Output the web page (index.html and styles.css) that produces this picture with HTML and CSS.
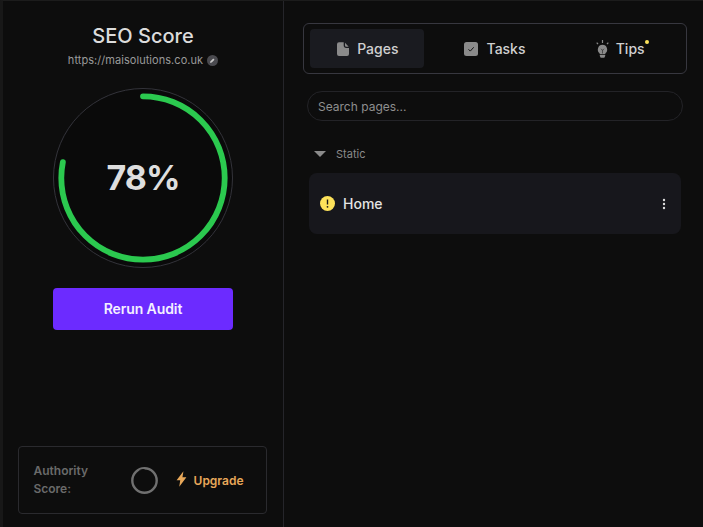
FILE: index.html
```html
<!DOCTYPE html>
<html lang="en">
<head>
<meta charset="utf-8">
<title>SEO Score</title>
<link rel="stylesheet" href="styles.css">
</head>
<body>
<div class="app">
  <aside class="side">
    <h1 class="title">SEO Score</h1>
    <div class="url">https://maisolutions.co.uk
      <span class="edit"><svg viewBox="0 0 10 10" width="7" height="7"><path d="M1.500 8.500l.6-2.400 4-4 1.800 1.800-4 4z" fill="#c8c8c8"/></svg></span>
    </div>
    <div class="gauge">
      <svg class="gauge-svg" viewBox="0 0 182 182" width="182" height="182">
        <circle cx="91" cy="91" r="89.500" fill="#0a0a0a" stroke="#33333a" stroke-width="1"/>
        <circle cx="91" cy="91" r="81.700" fill="none" stroke="#2bc94f" stroke-width="5.800" stroke-linecap="round" stroke-dasharray="400.400 513.300" transform="rotate(-90 91 91)"/>
      </svg>
      <span class="pct">78%</span>
    </div>
    <button class="rerun">Rerun Audit</button>
    <div class="authority">
      <div class="auth-label">Authority<br>Score:</div>
      <svg class="auth-ring" viewBox="0 0 27 27" width="27" height="27"><circle cx="13.500" cy="13.500" r="12.200" fill="none" stroke="#707070" stroke-width="2.400"/><path d="M8.500 3.400a11 11 0 0 1 5-.9" fill="none" stroke="#0d0d0d" stroke-width="1"/></svg>
      <div class="upgrade">
        <svg class="bolt" viewBox="0 0 10 15" width="11" height="16"><path d="M6.800.2L.4 8.600h3.400L2.900 14.800 9.600 5.800H5.900z" fill="#e8a85a"/></svg>
        <span>Upgrade</span>
      </div>
    </div>
  </aside>
  <main class="main">
    <nav class="tabs">
      <div class="tab active">
        <svg viewBox="0 0 12 14" width="12" height="14"><path d="M2 .3H6.700V3.600C6.700 5 7.700 6 9.100 6H12V12A2 2 0 0 1 10 14H2A2 2 0 0 1 0 12V2.300A2 2 0 0 1 2 .3zM8 .8L11.700 4.700H9.200A1.200 1.200 0 0 1 8 3.500z" fill="#8a8a8a"/></svg>
        <span>Pages</span>
      </div>
      <div class="tab tab-tasks">
        <svg viewBox="0 0 14 14" width="14" height="14"><rect width="14" height="14" rx="2.500" fill="#8a8a8a"/><path d="M4.500 7.300l1.800 1.800 3.400-3.800" fill="none" stroke="#111" stroke-width="1"/></svg>
        <span>Tasks</span>
      </div>
      <div class="tab tab-tips">
        <svg viewBox="0 0 13 18" width="13" height="18"><path d="M6.500 4.800a4.800 4.800 0 0 0-2.900 8.500V14h5.800v-.7A4.800 4.800 0 0 0 6.500 4.800z" fill="#8a8a8a"/><path d="M3.800 14.800h5.400v1.100l-.9 1.800H4.700l-.9-1.800z" fill="#8a8a8a"/><path d="M6.500 10v3.500M5 8.800l1.500 1.500L8 8.800" fill="none" stroke="#3a3a3a" stroke-width=".8"/><path d="M6.500 0v3M.7 2.600l1.300 1.600M12.300 2.600L11 4.200" stroke="#8a8a8a" stroke-width="1.200"/></svg>
        <span class="tips-label">Tips<i class="dot"></i></span>
      </div>
    </nav>
    <input class="search" type="text" placeholder="Search pages...">
    <div class="group">
      <svg viewBox="0 0 12 6" width="12" height="6"><path d="M0 0h12L6 6z" fill="#8a8a8a"/></svg>
      <span>Static</span>
    </div>
    <div class="card">
      <svg viewBox="0 0 15 15" width="15" height="15"><circle cx="7.500" cy="7.500" r="7.500" fill="#fde25a"/><path d="M7.500 3.500v5" stroke="#1a1a1a" stroke-width="1.400"/><circle cx="7.500" cy="10.800" r=".9" fill="#1a1a1a"/></svg>
      <span class="card-name">Home</span>
      <svg class="more" viewBox="0 0 4 12" width="4" height="12"><circle cx="2" cy="2" r="1.200" fill="#ddd"/><circle cx="2" cy="6" r="1.200" fill="#ddd"/><circle cx="2" cy="10" r="1.200" fill="#ddd"/></svg>
    </div>
  </main>
</div>
</body>
</html>
```
FILE: styles.css
```css
* { box-sizing: border-box; }
html, body { margin: 0; height: 100%; }
body {
  background: #0d0d0d;
  font-family: Inter, "Liberation Sans", sans-serif;
  color: #e0e0e0;
  overflow: hidden;
}
.app {
  display: flex;
  height: 527px;
  border-top: 1px solid #1c1c1c;
  border-left: 3px solid #181818;
}
.side {
  width: 281px;
  flex: none;
  border-right: 1px solid #25252a;
  display: flex;
  flex-direction: column;
  align-items: center;
  padding: 23px 0 13px;
}
.title {
  margin: 0;
  font-size: 20px;
  line-height: 24px;
  font-weight: 500;
  color: #dcdcdc;
}
.url {
  margin-top: 5px;
  font-size: 11px;
  line-height: 14px;
  letter-spacing: 0.05px;
  color: #9a9a9a;
  display: flex;
  align-items: center;
  gap: 4px;
}
.edit {
  width: 11px;
  height: 11px;
  border-radius: 50%;
  background: #4a4a4f;
  display: flex;
  align-items: center;
  justify-content: center;
}
.gauge {
  margin-top: 20px;
  width: 182px;
  height: 182px;
  position: relative;
  display: flex;
  align-items: center;
  justify-content: center;
  padding-bottom: 2px;
}
.gauge-svg { position: absolute; inset: 0; }
.pct {
  position: relative;
  font-size: 34px;
  font-weight: 700;
  letter-spacing: -1px;
  color: #dedede;
}
.rerun {
  margin-top: 19px;
  width: 180px;
  height: 42px;
  border: 0;
  border-radius: 4px;
  background: #6c2bff;
  color: #f4f0ff;
  padding: 0 0 2px;
  letter-spacing: -0.1px;
  font: 600 14px Inter, "Liberation Sans", sans-serif;
}
.authority {
  margin: auto 2px 0 0;
  width: 249px;
  height: 68px;
  border: 1px solid #2a2a2e;
  border-radius: 4px;
  display: flex;
  align-items: center;
  padding: 0 22px 0 15px;
}
.auth-label {
  font-size: 12px;
  line-height: 18px;
  font-weight: 600;
  color: #6a6a6a;
  width: 97px;
}
.auth-ring { flex: none; }
.upgrade {
  margin-left: auto;
  display: flex;
  align-items: center;
  gap: 7px;
  font-size: 12px;
  font-weight: 600;
  color: #e8a85a;
}
.bolt { margin-top: -2px; }
.main {
  flex: 1;
  padding: 22px 16px 0 19px;
  display: flex;
  flex-direction: column;
  align-items: flex-start;
}
.tabs {
  width: 384px;
  height: 51px;
  border: 1px solid #37373f;
  border-radius: 6px;
  padding: 5px 6px;
  display: flex;
  gap: 14px;
}
.tab {
  flex: 1;
  display: flex;
  align-items: center;
  justify-content: center;
  gap: 8px;
  border-radius: 4px;
  font-size: 14px;
  font-weight: 500;
  color: #d0d0d0;
  padding-left: 2px;
}
.tab.active { background: #1a1b20; }
.tab-tasks { gap: 9px; padding-left: 1px; }
.tab-tips { gap: 7px; padding: 0 4px 0 0; }
.tips-label { position: relative; }
.dot {
  position: absolute;
  top: 0;
  right: -4px;
  width: 4px;
  height: 4px;
  border-radius: 50%;
  background: #fde25a;
}
.search {
  margin: 17px 0 0 4px;
  width: 376px;
  height: 30px;
  border: 1px solid #232327;
  border-radius: 15px;
  background: transparent;
  padding: 0 10px;
  font: 400 12px Inter, "Liberation Sans", sans-serif;
  color: #ddd;
}
.search::placeholder { color: #8f8f8f; opacity: 1; }
.group {
  margin: 26px 0 0 11px;
  display: flex;
  align-items: center;
  gap: 10px;
  font-size: 11px;
  line-height: 14px;
  color: #8a8a8a;
}
.card {
  margin: 12px 0 0 6px;
  width: 372px;
  height: 61px;
  border-radius: 8px;
  background: #17171c;
  display: flex;
  align-items: center;
  padding: 0 15px 0 11px;
  gap: 8px;
}
.card-name {
  font-size: 14px;
  font-weight: 500;
  color: #e4e4e4;
}
.more { margin-left: auto; }
```
